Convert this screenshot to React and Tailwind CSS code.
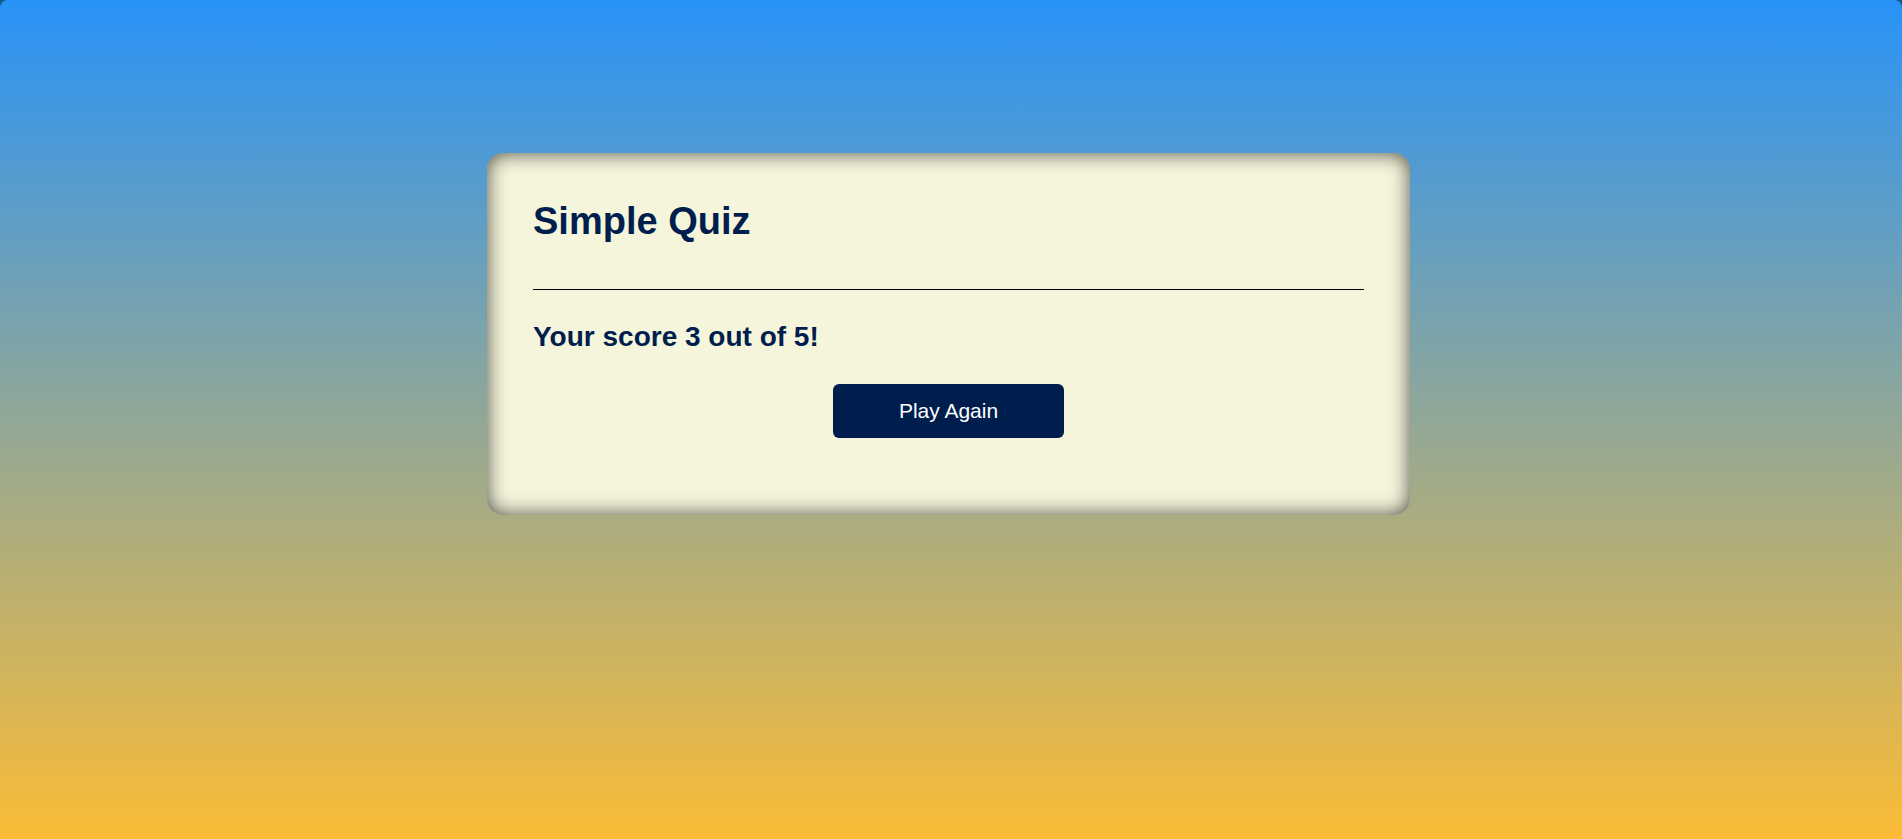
export default function App() {
  return (
    <div className="min-h-screen bg-[#0f5a80] font-['Liberation_Sans',Arial,sans-serif]">
      <main className="min-h-screen rounded-t-lg bg-linear-to-b/srgb from-[#2893f8] to-[#fbbc36] pt-[153px] pr-[5px]">
        <section className="mx-auto w-full max-w-[923px] rounded-2xl bg-[#f5f5dc] px-[46px] pt-[44px] pb-[77px] shadow-[inset_0_0_20px_rgba(0,0,0,0.7)]">
          <h1 className="border-b border-black pb-[44px] text-[38px] leading-[48px] font-bold text-[#001e4d]">Simple Quiz</h1>
          <h2 className="mt-[30px] text-[28px] leading-[34px] font-bold text-[#001e4d]">Your score 3 out of 5!</h2>
          <button type="button" className="mx-auto mt-[30px] block h-[54px] w-[231px] rounded-md bg-[#001e4d] text-[21px] text-white">Play Again</button>
        </section>
      </main>
    </div>
  );
}
